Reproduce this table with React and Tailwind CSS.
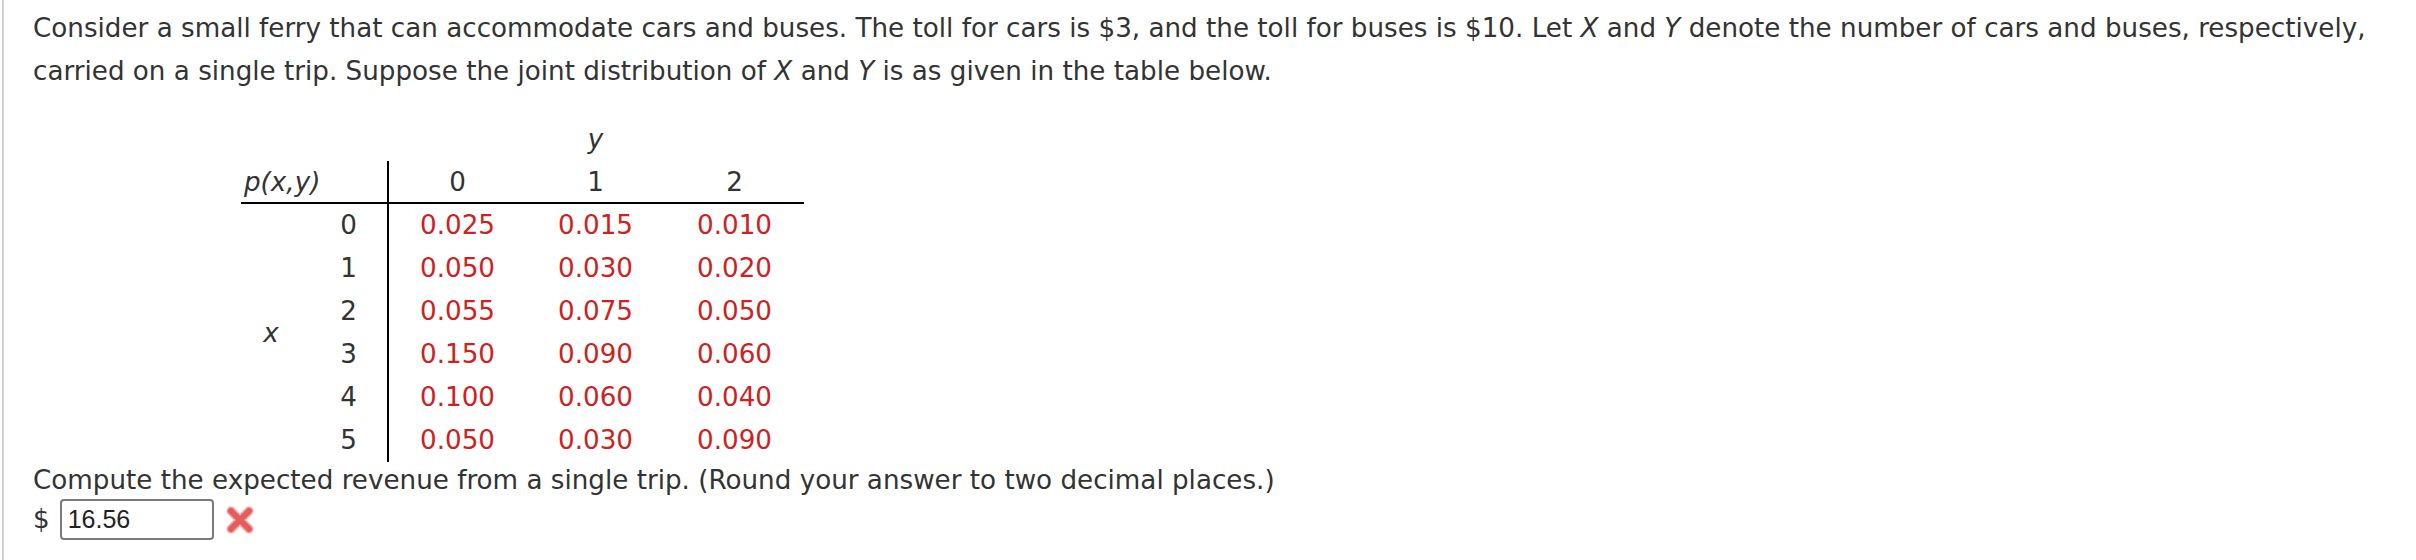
export default function App() {
  const rows = [
    ["0", "0.025", "0.015", "0.010"],
    ["1", "0.050", "0.030", "0.020"],
    ["2", "0.055", "0.075", "0.050"],
    ["3", "0.150", "0.090", "0.060"],
    ["4", "0.100", "0.060", "0.040"],
    ["5", "0.050", "0.030", "0.090"],
  ];
  return (
    <div
      className="h-[560px] w-[2416px] bg-white text-[#333] overflow-hidden"
      style={{ fontFamily: '"DejaVu Sans", Verdana, sans-serif' }}
    >
      <div className="ml-[2px] h-full border-l-2 border-[#d0d0d0] pl-[29px] pt-[7px] text-[26.2px]">
        <p className="leading-[43px] whitespace-nowrap">
          Consider a small ferry that can accommodate cars and buses. The toll for cars is $3, and the toll for buses is $10. Let <i>X</i> and <i>Y</i> denote the number of cars and buses, respectively,
          <br />
          carried on a single trip. Suppose the joint distribution of <i>X</i> and <i>Y</i> is as given in the table below.
        </p>

        <div className="ml-[208px] mt-[25px] grid w-[563px] grid-cols-[60px_86px_139px_139px_139px] auto-rows-[43px] leading-[43px]">
          <div className="col-span-2" />
          <div className="col-span-3 text-center italic">y</div>

          <div className="col-span-2 border-b-2 border-black pl-[3px] italic">p(x,y)</div>
          <div className="border-b-2 border-l-2 border-black text-center">0</div>
          <div className="border-b-2 border-black text-center">1</div>
          <div className="border-b-2 border-black text-center">2</div>

          <div className="row-span-6 flex items-center justify-center italic">x</div>
          {rows.map((r) => (
            <div key={r[0]} className="contents">
              <div className="pr-[30px] text-right">{r[0]}</div>
              <div className="border-l-2 border-black text-center text-[#cc2222]">{r[1]}</div>
              <div className="text-center text-[#cc2222]">{r[2]}</div>
              <div className="text-center text-[#cc2222]">{r[3]}</div>
            </div>
          ))}
        </div>

        <p className="leading-[37px]">
          Compute the expected revenue from a single trip. (Round your answer to two decimal places.)
        </p>
        <div className="flex h-[41px] items-center">
          <span className="mr-[10px]">$</span>
          <div
            className="flex h-[41px] w-[154px] items-center rounded-[4px] border-2 border-[#7a7a7a] pl-[6px] text-[25px] text-[#222]"
            style={{ fontFamily: '"Liberation Sans", Arial, sans-serif' }}
          >
            16.56
          </div>
          <svg className="ml-[12px]" width="28" height="28" viewBox="0 0 28 28">
            <g strokeLinecap="round">
              <line x1="5" y1="5" x2="23" y2="23" stroke="#f4a8a8" strokeWidth="9" />
              <line x1="23" y1="5" x2="5" y2="23" stroke="#f4a8a8" strokeWidth="9" />
              <line x1="5" y1="5" x2="23" y2="23" stroke="#e35d5d" strokeWidth="6" />
              <line x1="23" y1="5" x2="5" y2="23" stroke="#e35d5d" strokeWidth="6" />
            </g>
          </svg>
        </div>
      </div>
    </div>
  );
}
